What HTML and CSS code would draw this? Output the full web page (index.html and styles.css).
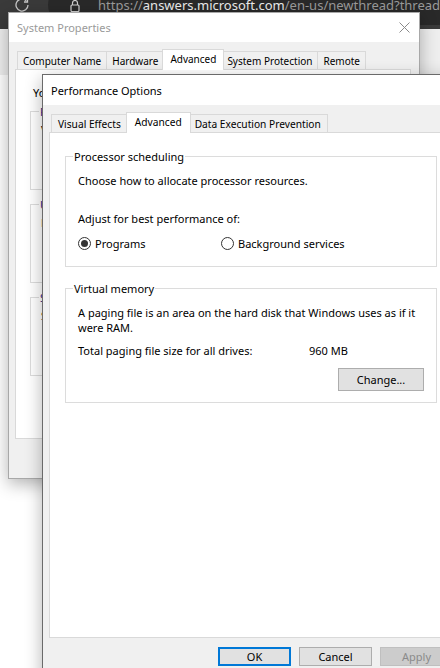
FILE: index.html
```html
<!DOCTYPE html>
<html>
<head>
    <title>Performance Options</title>
    <link rel="stylesheet" href="styles.css">
</head>
<body>
    <div class="toolbar">
        <svg class="reload" width="16" height="16" viewBox="0 0 16 16">
            <path d="M14 8a6 6 0 1 1-1.76-4.24" fill="none" stroke="#c8c8c8" stroke-width="1.3"/>
            <path d="M13.5 1.5v3.5h-3.5" fill="none" stroke="#c8c8c8" stroke-width="1.3"/>
        </svg>
        <div class="omnibox">
            <svg class="lock" width="10" height="13" viewBox="0 0 10 13">
                <path d="M2.5 6V4a2.5 2.5 0 0 1 5 0v2" fill="none" stroke="#cfcfcf" stroke-width="1.2"/>
                <rect x="1" y="6" width="8" height="6.5" rx="1" fill="none" stroke="#cfcfcf" stroke-width="1.2"/>
            </svg>
            <span class="url"><span class="dim">https://</span>answers.microsoft.com<span class="dim">/en-us/newthread?threadtype=Questions</span></span>
        </div>
    </div>
    <div class="page-band"></div>

    <!-- fenêtre en arrière-plan -->
    <div class="window sysprops">
        <div class="titlebar">
            <span class="title">System Properties</span>
            <svg class="close" width="11" height="11" viewBox="0 0 11 11">
                <path d="M0.5 0.5l10 10M10.5 0.5l-10 10" stroke="#8a8a8a" stroke-width="1"/>
            </svg>
        </div>
        <div class="client">
            <div class="tabs">
                <div class="tab">Computer Name</div>
                <div class="tab">Hardware</div>
                <div class="tab active">Advanced</div>
                <div class="tab">System Protection</div>
                <div class="tab">Remote</div>
            </div>
            <div class="tabpage sys-page">
                <p class="line">You must be logged on as an Administrator to make most of these changes.</p>
                <fieldset class="group sys-group">
                    <legend>Performance</legend>
                    <p class="line">Visual effects, processor scheduling, memory usage, and virtual memory</p>
                    <div class="btn-row"><button class="btn">Settings...</button></div>
                </fieldset>
                <fieldset class="group sys-group">
                    <legend>User Profiles</legend>
                    <p class="line">Desktop settings related to your sign-in</p>
                    <div class="btn-row"><button class="btn">Settings...</button></div>
                </fieldset>
                <fieldset class="group sys-group">
                    <legend>Startup and Recovery</legend>
                    <p class="line">System startup, system failure, and debugging information</p>
                    <div class="btn-row"><button class="btn">Settings...</button></div>
                </fieldset>
                <div class="btn-row env"><button class="btn wide">Environment Variables...</button></div>
            </div>
            <div class="dialog-buttons">
                <button class="btn">OK</button>
                <button class="btn">Cancel</button>
                <button class="btn" disabled>Apply</button>
            </div>
        </div>
    </div>

    <!-- fenêtre active -->
    <div class="window perf">
        <div class="titlebar">
            <span class="title">Performance Options</span>
        </div>
        <div class="client">
            <div class="tabs">
                <div class="tab">Visual Effects</div>
                <div class="tab active">Advanced</div>
                <div class="tab">Data Execution Prevention</div>
            </div>
            <div class="tabpage perf-page">
                <fieldset class="group">
                    <legend>Processor scheduling</legend>
                    <p class="line first">Choose how to allocate processor resources.</p>
                    <p class="line adjust">Adjust for best performance of:</p>
                    <div class="radio-row">
                        <label class="radio"><span class="dot checked"></span>Programs</label>
                        <label class="radio"><span class="dot"></span>Background services</label>
                    </div>
                </fieldset>
                <fieldset class="group memory">
                    <legend>Virtual memory</legend>
                    <p class="line first">A paging file is an area on the hard disk that Windows uses as if it were RAM.</p>
                    <div class="mem-row">
                        <span class="mem-label">Total paging file size for all drives:</span>
                        <span>960 MB</span>
                    </div>
                    <div class="btn-row"><button class="btn change">Change...</button></div>
                </fieldset>
            </div>
            <div class="dialog-buttons">
                <button class="btn default">OK</button>
                <button class="btn">Cancel</button>
                <button class="btn" disabled>Apply</button>
            </div>
        </div>
    </div>
</body>
</html>
```

FILE: styles.css
```css
* {
    box-sizing: border-box;
}

body {
    margin: 0;
    width: 440px;
    height: 668px;
    overflow: hidden;
    position: relative;
    background: #ffffff;
    font-family: "Noto Sans", sans-serif;
    font-size: 11px;
    color: #000000;
}

/* barre du navigateur derrière les fenêtres */
.toolbar {
    position: absolute;
    left: 0;
    top: -19px;
    width: 100%;
    height: 48px;
    display: flex;
    align-items: center;
    background: #3a3a3a;
}

.reload {
    margin-left: 14px;
    flex-shrink: 0;
}

.omnibox {
    margin-left: 18px;
    height: 40px;
    flex: 1;
    display: flex;
    align-items: center;
    padding-left: 22px;
    border-radius: 20px 0 0 20px;
    background: #292929;
    overflow: hidden;
}

.lock {
    flex-shrink: 0;
}

.url {
    margin-left: 18px;
    font-size: 13px;
    color: #ececec;
    white-space: nowrap;
}

.url .dim {
    color: #9b9b9b;
}

.page-band {
    position: absolute;
    left: 0;
    top: 29px;
    width: 100%;
    height: 46px;
    background: #eeeeee;
}

/* fenêtres */
.window {
    position: absolute;
    display: flex;
    flex-direction: column;
    background: #f0f0f0;
    box-shadow: 0 5px 16px rgba(0, 0, 0, 0.3);
}

.sysprops {
    left: 8px;
    top: 12px;
    width: 412px;
    height: 467px;
    border: 1px solid #a8a8a8;
}

.perf {
    left: 42px;
    top: 74px;
    width: 418px;
    height: 620px;
    border: 1px solid #6a6a6a;
}

.titlebar {
    display: flex;
    align-items: center;
    flex-shrink: 0;
    background: #ffffff;
    padding-left: 8px;
}

.sysprops .titlebar {
    height: 29px;
}

.perf .titlebar {
    height: 30px;
}

.title {
    flex: 1;
    font-size: 11px;
}

.sysprops .title {
    color: #9a9a9a;
}

.close {
    margin-right: 9px;
}

.client {
    padding: 7px 8px 0 6px;
}

.perf .client {
    padding-right: 6px;
}

/* onglets */
.tabs {
    display: flex;
    align-items: flex-end;
    height: 20px;
    padding-left: 2px;
}

.tab {
    height: 18px;
    padding: 0 6px;
    display: flex;
    align-items: center;
    border: 1px solid #d9d9d9;
    border-bottom: none;
    background: #f0f0f0;
    margin-left: -1px;
    font-size: 10.2px;
    white-space: nowrap;
}

.sysprops .tab {
    font-size: 10px;
    padding: 0 5px;
}

.tab:first-child {
    margin-left: 0;
}

.tab.active {
    position: relative;
    z-index: 1;
    height: 21px;
    margin: 0 -2px -1px -2px;
    padding: 0 8px 3px 8px;
    background: #ffffff;
}

.sysprops .tab.active {
    padding: 0 7px 3px 7px;
}

.tabpage {
    background: #ffffff;
    border: 1px solid #d9d9d9;
}

.line {
    margin: 0;
    line-height: 15px;
    white-space: nowrap;
}

/* cadres de groupe */
.group {
    margin: 0;
    border: 1px solid #dcdcdc;
    padding: 0 12px 15px 12px;
}

.group legend {
    margin-left: -5px;
    padding: 0 1px;
    line-height: 15px;
}

.sys-page {
    height: 370px;
    padding: 15px 0 0 17px;
}

.sys-group {
    margin: 7px 0 0 -3px;
    width: 365px;
    height: 86px;
    padding: 0 10px;
}

.sys-group:first-of-type {
    margin-top: 4px;
}

.sys-group legend {
    margin-left: -2px;
    color: #2e2a86;
}

.sys-group .line {
    margin-top: 3px;
}

.sys-group .btn-row {
    margin-top: 19px;
}

.env {
    margin: 14px 14px 0 0;
}

.perf-page {
    height: 506px;
    padding: 16px 15px 0 15px;
}

.perf-page .first {
    margin-top: 9px;
}

.perf-page .adjust {
    margin-top: 23px;
}

.radio-row {
    display: flex;
    margin-top: 10px;
    line-height: 15px;
}

.radio {
    display: flex;
    align-items: center;
    gap: 4px;
    width: 143px;
    white-space: nowrap;
}

.dot {
    width: 13px;
    height: 13px;
    border: 1px solid #333333;
    border-radius: 50%;
    display: flex;
    align-items: center;
    justify-content: center;
}

.dot.checked::after {
    content: "";
    width: 7px;
    height: 7px;
    border-radius: 50%;
    background: #333333;
}

.memory {
    margin-top: 14px;
    padding-bottom: 11px;
}

.memory .first {
    white-space: normal;
}

.mem-row {
    display: flex;
    margin-top: 8px;
    line-height: 15px;
}

.mem-label {
    width: 231px;
}

.btn-row {
    display: flex;
    justify-content: flex-end;
}

/* boutons */
.btn {
    width: 73px;
    height: 21px;
    padding: 0;
    border: 1px solid #adadad;
    background: #e1e1e1;
    font-family: inherit;
    font-size: 11px;
    color: #000000;
}

.btn.wide {
    width: 150px;
}

.btn.change {
    width: 86px;
    height: 23px;
    margin-top: 10px;
}

.btn.default {
    border: 2px solid #0078d7;
}

.btn:disabled {
    background: #cccccc;
    border-color: #bfbfbf;
    color: #8a8a8a;
}

.dialog-buttons {
    display: flex;
    justify-content: flex-end;
    gap: 8px;
    padding-top: 9px;
}

.perf .dialog-buttons .btn {
    height: 19px;
}
```
